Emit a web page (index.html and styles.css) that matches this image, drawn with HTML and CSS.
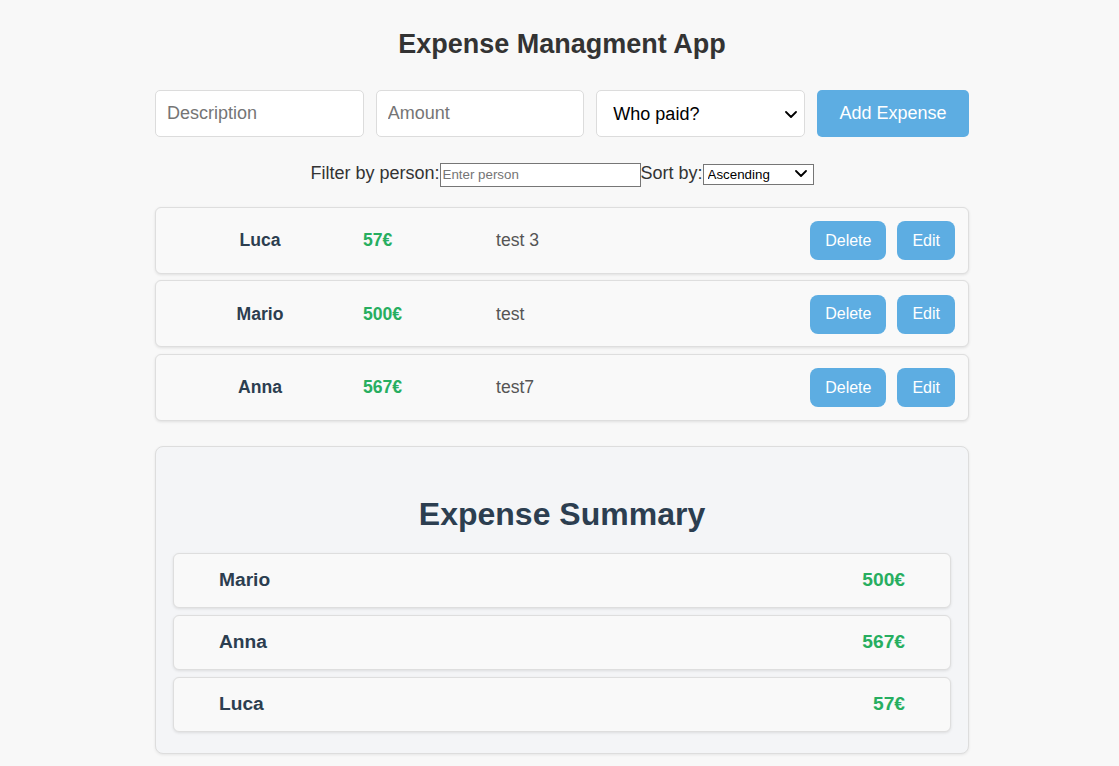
FILE: index.html
```html
<!DOCTYPE html>
<html lang="en">
<head>
<meta charset="utf-8">
<title>Expense Managment App</title>
<link rel="stylesheet" href="styles.css">
</head>
<body>
<div class="app">
  <h1 class="title">Expense Managment App</h1>

  <form class="add-form">
    <input class="field" type="text" placeholder="Description">
    <input class="field" type="text" placeholder="Amount">
    <div class="select-wrap">
      <select class="field-select">
        <option>Who paid?</option>
        <option>Mario</option>
        <option>Anna</option>
        <option>Luca</option>
      </select>
      <svg class="chev chev-lg" viewBox="0 0 12 7" width="12" height="7" aria-hidden="true"><path d="M1 1l5 5 5-5" fill="none" stroke="#000" stroke-width="1.8" stroke-linecap="round" stroke-linejoin="round"/></svg>
    </div>
    <button class="add-btn" type="button">Add Expense</button>
  </form>

  <div class="filters">
    <label class="filter-label">Filter by person:</label><input class="filter-input" type="text" placeholder="Enter person"><label class="filter-label">Sort by:</label><span class="sort-wrap"><select class="sort-select">
      <option>Ascending</option>
      <option>Descending</option>
    </select><svg class="chev chev-sm" viewBox="0 0 12 7" width="12" height="7" aria-hidden="true"><path d="M1 1l5 5 5-5" fill="none" stroke="#000" stroke-width="1.8" stroke-linecap="round" stroke-linejoin="round"/></svg></span>
  </div>

  <div class="expense-list">
    <div class="expense-row">
      <span class="exp-name">Luca</span>
      <span class="exp-amount">57€</span>
      <span class="exp-desc">test 3</span>
      <div class="exp-actions">
        <button class="small-btn" type="button">Delete</button>
        <button class="small-btn" type="button">Edit</button>
      </div>
    </div>
    <div class="expense-row">
      <span class="exp-name">Mario</span>
      <span class="exp-amount">500€</span>
      <span class="exp-desc">test</span>
      <div class="exp-actions">
        <button class="small-btn" type="button">Delete</button>
        <button class="small-btn" type="button">Edit</button>
      </div>
    </div>
    <div class="expense-row">
      <span class="exp-name">Anna</span>
      <span class="exp-amount">567€</span>
      <span class="exp-desc">test7</span>
      <div class="exp-actions">
        <button class="small-btn" type="button">Delete</button>
        <button class="small-btn" type="button">Edit</button>
      </div>
    </div>
  </div>

  <div class="summary">
    <h2 class="summary-title">Expense Summary</h2>
    <div class="summary-list">
      <div class="summary-row"><span class="sum-name">Mario</span><span class="sum-amount">500€</span></div>
      <div class="summary-row"><span class="sum-name">Anna</span><span class="sum-amount">567€</span></div>
      <div class="summary-row"><span class="sum-name">Luca</span><span class="sum-amount">57€</span></div>
    </div>
  </div>
</div>
</body>
</html>
```

FILE: styles.css
```css
html, body {
  margin: 0;
  padding: 0;
}

body {
  background: #f8f8f8;
  font-family: "Liberation Sans", Arial, sans-serif;
  color: #333;
}

.app {
  box-sizing: border-box;
  width: 819px;
  margin: 0 auto;
  padding: 29px 0 40px 5px;
}

.title {
  margin: 0;
  font-size: 27px;
  line-height: 30px;
  font-weight: bold;
  text-align: center;
  color: #333;
}

.add-form {
  display: flex;
  gap: 12px;
  margin-top: 31px;
}

.field,
.field-select {
  box-sizing: border-box;
  height: 47px;
  padding: 0 11px;
  border: 1px solid #dcdcdc;
  border-radius: 5px;
  background: #fff;
  font-family: "Liberation Sans", Arial, sans-serif;
  font-size: 18px;
  color: #000;
}

.field {
  flex: 1 1 200px;
  width: 200px;
  min-width: 0;
}

.field::placeholder {
  color: #757575;
}

.select-wrap {
  position: relative;
  flex: 1 1 200px;
  width: 200px;
  min-width: 0;
  display: flex;
}

.field-select {
  width: 100%;
  appearance: none;
  -webkit-appearance: none;
  padding: 0 30px 0 16px;
}

.chev {
  position: absolute;
  pointer-events: none;
}

.chev-lg {
  right: 8px;
  top: 21px;
}

.add-btn {
  flex: none;
  box-sizing: border-box;
  width: 152px;
  height: 47px;
  padding: 0;
  border: none;
  border-radius: 5px;
  background: #5dade2;
  color: #fff;
  font-family: "Liberation Sans", Arial, sans-serif;
  font-size: 18px;
}

.filters {
  margin-top: 24px;
  text-align: center;
  font-size: 18px;
  line-height: 24px;
  color: #333;
}

.filter-input {
  box-sizing: border-box;
  width: 201px;
  height: 24px;
  margin: 0;
  padding: 1px 2px;
  border: 1px solid #767676;
  border-radius: 0;
  font-family: "Liberation Sans", Arial, sans-serif;
  font-size: 13.33px;
  vertical-align: baseline;
}

.filter-input::placeholder {
  color: #757575;
}

.sort-wrap {
  position: relative;
  display: inline-block;
}

.sort-select {
  box-sizing: border-box;
  width: 111px;
  height: 21px;
  margin: 0;
  padding: 0 20px 0 4px;
  appearance: none;
  -webkit-appearance: none;
  border: 1px solid #767676;
  border-radius: 0;
  background: #fff;
  font-family: "Liberation Sans", Arial, sans-serif;
  font-size: 13.33px;
  color: #000;
}

.chev-sm {
  right: 7px;
  top: 50%;
  margin-top: -3px;
}

.expense-list {
  display: flex;
  flex-direction: column;
  gap: 6.5px;
  margin-top: 20px;
}

.expense-row {
  box-sizing: border-box;
  display: flex;
  align-items: center;
  height: 67px;
  padding: 1px 13px 0 4px;
  background: #f9f9f9;
  border: 1px solid #dedede;
  border-radius: 6px;
  box-shadow: 0 1px 3px rgba(0, 0, 0, 0.1);
  font-size: 17.6px;
}

.exp-name {
  flex: none;
  width: 200px;
  text-align: center;
  font-weight: bold;
  color: #2c3e50;
}

.exp-amount {
  flex: none;
  width: 133px;
  margin-left: 3px;
  font-weight: bold;
  color: #27ae60;
}

.exp-desc {
  flex: 1;
  color: #555;
}

.exp-actions {
  display: flex;
  gap: 11px;
}

.small-btn {
  box-sizing: border-box;
  height: 39px;
  padding: 0 15px;
  border: none;
  border-radius: 8px;
  background: #5dade2;
  color: #fff;
  font-family: "Liberation Sans", Arial, sans-serif;
  font-size: 16px;
}

.summary {
  margin-top: 25px;
  padding: 20px 17px 21px;
  background: #f4f5f7;
  border: 1px solid #dddddd;
  border-radius: 8px;
  box-shadow: 0 1px 3px rgba(0, 0, 0, 0.08);
}

.summary-title {
  margin: 29px 0 20px;
  font-size: 32px;
  font-weight: bold;
  text-align: center;
  color: #2c3e50;
}

.summary-list {
  display: flex;
  flex-direction: column;
  gap: 7px;
}

.summary-row {
  box-sizing: border-box;
  display: flex;
  align-items: center;
  justify-content: space-between;
  height: 55px;
  padding: 0 45px 0 45px;
  background: #f9f9f9;
  border: 1px solid #dedede;
  border-radius: 6px;
  box-shadow: 0 1px 3px rgba(0, 0, 0, 0.1);
  font-size: 19.2px;
  font-weight: bold;
}

.sum-name {
  color: #2c3e50;
}

.sum-amount {
  color: #27ae60;
}
```
